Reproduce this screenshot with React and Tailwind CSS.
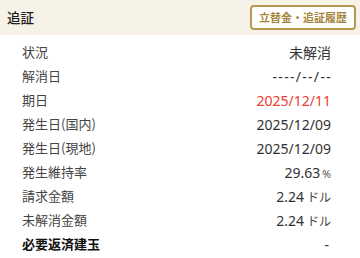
import React from 'react';

const rows = [
  { label: '状況', value: '未解消' },
  { label: '解消日', value: '----/--/--', dash: true },
  { label: '期日', value: '2025/12/11', red: true },
  { label: '発生日(国内)', value: '2025/12/09' },
  { label: '発生日(現地)', value: '2025/12/09' },
  { label: '発生維持率', value: '29.63', unit: '%' },
  { label: '請求金額', value: '2.24', unit: 'ドル' },
  { label: '未解消金額', value: '2.24', unit: 'ドル' },
  { label: '必要返済建玉', value: '-', bold: true },
];

export default function App() {
  return (
    <div className="w-[360px] h-[258px] bg-white overflow-hidden" style={{ fontFamily: '"Noto Sans CJK JP", "Noto Sans", sans-serif' }}>
      <div className="h-[35px] bg-[#f6f2e7] flex items-center justify-between pl-[7px] pr-[4px]">
        <span className="text-[13.5px] font-medium text-[#1a1a1a]">追証</span>
        <button className="h-[25px] px-[7px] rounded-[4px] border-2 border-[#b39a50] bg-white text-[11px] font-bold text-[#a4863a] leading-none">
          立替金・追証履歴
        </button>
      </div>
      <div className="pt-[5px] pl-[22px] pr-[29px]">
        {rows.map((r) => (
          <div key={r.label} className="h-6 flex items-center justify-between">
            <span className={r.bold ? 'text-[13px] font-bold text-[#111]' : 'text-[13px] text-[#444]'}>{r.label}</span>
            <span
              className={
                (r.red ? 'text-[14px] text-[#ee3b2f]' : 'text-[14px] text-[#333]') +
                (r.dash ? ' tracking-[1.3px] mr-[-1px]' : '') +
                (r.bold ? ' mr-[2px]' : '')
              }
              style={{ fontFamily: '"Noto Sans", "Noto Sans CJK JP", sans-serif' }}
            >
              {r.value}
              {r.unit && (
                <span className={r.unit === '%' ? 'text-[10.5px] ml-[2px] text-[#555]' : 'text-[12px] ml-[3px] text-[#444]'}>{r.unit}</span>
              )}
            </span>
          </div>
        ))}
      </div>
    </div>
  );
}
